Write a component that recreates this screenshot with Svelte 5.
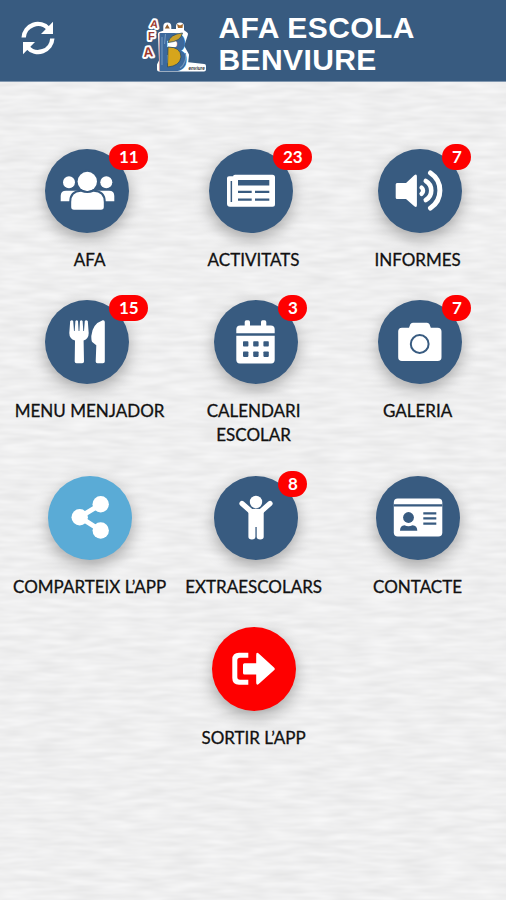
<script lang="ts">
  type Item = {
    label: string;
    icon: string;
    badge?: number;
    tone?: string;
  };

  const rows: Item[][] = [
    [
      { label: 'AFA', icon: 'users', badge: 11 },
      { label: 'ACTIVITATS', icon: 'news', badge: 23 },
      { label: 'INFORMES', icon: 'sound', badge: 7 }
    ],
    [
      { label: 'MENU MENJADOR', icon: 'food', badge: 15 },
      { label: 'CALENDARI ESCOLAR', icon: 'calendar', badge: 3 },
      { label: 'GALERIA', icon: 'camera', badge: 7 }
    ],
    [
      { label: 'COMPARTEIX L’APP', icon: 'share', tone: 'light' },
      { label: 'EXTRAESCOLARS', icon: 'child', badge: 8 },
      { label: 'CONTACTE', icon: 'card' }
    ],
    [{ label: 'SORTIR L’APP', icon: 'exit', tone: 'danger' }]
  ];
</script>

<div class="page">
  <svg class="paper" aria-hidden="true">
    <filter id="paper" x="0" y="0" width="100%" height="100%" color-interpolation-filters="sRGB">
      <feTurbulence type="fractalNoise" baseFrequency="0.03 0.17" numOctaves="2" seed="8" />
      <feColorMatrix
        values="0.08 0 0 0 0.896
                0.08 0 0 0 0.896
                0.08 0 0 0 0.898
                0 0 0 0 1"
      />
    </filter>
    <rect width="100%" height="100%" filter="url(#paper)" />
  </svg>

  <header>
    <button class="refresh" aria-label="Refresh">
      <svg viewBox="0 0 36 36">
        <g id="half">
          <path d="M3.7 17.5A14.2 14.2 0 0 1 28.5 8.8" fill="none" stroke="#fff" stroke-width="4.4" />
          <path d="M33 1.8V14H21Z" fill="#fff" />
        </g>
        <use href="#half" transform="rotate(180 18 18)" />
      </svg>
    </button>

    <svg class="logo" viewBox="0 0 72 64" aria-hidden="true">
      <g class="halo">
        <path d="M21 21L30 18H43L47 21L43 33L48 42L47 51L65 53V56.5H20V52L22 48Z" />
        <path d="M28.3 13.5V18M41 13.5V18" />
      </g>
      <g class="letters">
        <text x="11.5" y="14.5" font-size="10.5" transform="rotate(8 15 11)">A</text>
        <text x="9" y="27" font-size="11">F</text>
        <text x="4.5" y="43.5" font-size="13.5" transform="rotate(-4 10 40)">A</text>
      </g>
      <text class="b" x="18.5" y="56.5" font-size="52" textLength="30" lengthAdjust="spacingAndGlyphs">B</text>
      <path d="M29 29.5Q31 21 43.5 20Q42 28.5 29 29.5Z" fill="#c9a02c" stroke="#2d4d63" stroke-width=".8" />
      <path d="M29 34Q42 34 42 44Q41 53 28.5 54Z" fill="#d6a51c" stroke="#2d4d63" stroke-width=".8" />
      <path d="M23 24V52M26.5 21L25.5 31M46.5 40Q48 50 41 55" fill="none" stroke="#7297bd" stroke-width="1.1" />
      <path d="M25.8 15.5L28.3 11.2L30.8 15.5Z" fill="#94602d" />
      <path d="M38 11L41 12.5L44 11L43.5 15H39Z" fill="#a4692c" />
      <text class="small" x="49.5" y="56.5">enviure</text>
    </svg>

    <h1>AFA ESCOLA<br />BENVIURE</h1>
  </header>

  <main>
    {#each rows as row}
      <div class="row">
        {#each row as item}
          <button class="item">
            <span class="top">
              <span class="circle {item.tone ?? ''}">
                <svg viewBox="0 0 84 84" fill="currentColor">
                  {#if item.icon === 'users'}
                    <circle cx="24" cy="33.3" r="6" />
                    <circle cx="61.3" cy="33.3" r="6" />
                    <path d="M15.7 52.3V47Q15.7 41.7 21 41.7H64Q69.3 41.7 69.3 47V52.3Z" />
                    <g class="cut">
                      <circle cx="42.3" cy="32.5" r="9.7" />
                      <path d="M26.2 58V53Q26.2 43 36 42.7Q42.3 45.5 48.6 42.7Q58.8 43 58.8 53V58Q58.8 60.7 56 60.7H29Q26.2 60.7 26.2 58Z" />
                    </g>
                  {:else if item.icon === 'news'}
                    <path d="M18 29Q18 27.3 20 27.3H24V27.5Q24 25.7 26 25.7H63.5Q66 25.7 66 28.2V55.2Q66 57.7 63.5 57.7H21Q18 57.7 18 54.7Z" />
                    <path class="hole" d="M21.6 32H23.1V53H21.6ZM29 31H60.3V36.4H29ZM29 41.7H42.7V44H29ZM46 41.7H60.3V44H46ZM29 49.4H42.7V51.8H29ZM46 49.4H60.3V51.8H46Z" />
                  {:else if item.icon === 'sound'}
                    <path d="M19 34H28L36.3 26.2Q38.9 24.3 38.9 27.5V56Q38.9 59.2 36.3 57.2L28 50H19Q17.7 50 17.7 48.5V35.5Q17.7 34 19 34Z" />
                    <g class="line">
                      <path d="M52.5 24A21 21 0 0 1 52.5 59" stroke-width="5" />
                      <path d="M47.8 32A11 11 0 0 1 47.8 51" stroke-width="4.6" />
                      <path d="M43.6 38.6A4 4 0 0 1 43.6 44.8" stroke-width="4.4" />
                    </g>
                  {:else if item.icon === 'food'}
                    <path d="M25.2 21Q27 19.6 28.2 21L29 31H29.7L30.4 21Q31.7 19.6 33 21L33.6 31H34.4L35 21Q36.3 19.6 37.6 21L38.3 31H39L39.8 21Q41 19.6 42.8 21L43.7 33Q43.7 38.8 38.6 40.5L39 61.5Q39 63.3 37.2 63.3H31.5Q29.7 63.3 29.7 61.5L30 40.5Q24.3 38.8 24.3 33Z" />
                    <path d="M59.8 22V61.5Q59.8 63.3 58 63.3H52.4Q50.7 63.3 50.7 61.5L51.3 45.3L47.2 42Q46.3 41 46.3 36Q47.3 24 57.7 20.3Q59.8 20 59.8 22Z" />
                  {:else if item.icon === 'calendar'}
                    <path d="M22.3 33.2V29.3Q22.3 25.4 26.2 25.4H30.7V22Q30.7 20.3 32.3 20.3H34.4Q36 20.3 36 22V25.4H47V22Q47 20.3 48.6 20.3H50.7Q52.3 20.3 52.3 22V25.4H56.8Q60.7 25.4 60.7 29.3V33.2Z" />
                    <path d="M22.3 35.8H60.7V59.8Q60.7 63.4 57.2 63.4H25.8Q22.3 63.4 22.3 59.8Z" />
                    <g class="hole">
                      {#each [29, 39.2, 49.4] as x}
                        <rect {x} y="41.2" width="5.4" height="5.4" rx=".8" />
                        <rect {x} y="51.5" width="5.4" height="5.4" rx=".8" />
                      {/each}
                    </g>
                  {:else if item.icon === 'camera'}
                    <path d="M24 27.7H31L32.3 24.2Q33 22.7 34.8 22.7H49Q50.8 22.7 51.5 24.2L52.8 27.7H59.6Q63.5 27.7 63.5 31.5V57.2Q63.5 61 59.6 61H24Q20.2 61 20.2 57.2V31.5Q20.2 27.7 24 27.7Z" />
                    <circle class="ring" cx="41.7" cy="44" r="8.9" />
                  {:else if item.icon === 'share'}
                    <path class="line" d="M52.7 28.3L31.7 41.2L52.7 54.5" stroke-width="5" />
                    <circle cx="31.7" cy="41.2" r="8.2" />
                    <circle cx="52.7" cy="28.3" r="8.2" />
                    <circle cx="52.7" cy="54.5" r="8.2" />
                  {:else if item.icon === 'child'}
                    <circle cx="42" cy="26" r="6.2" />
                    <path class="line" d="M28 27.5L37 35.5H47L56 27.5" stroke-width="5.2" />
                    <path d="M34.4 33.5Q42 32 49.7 33.5V60.8Q49.7 63.4 46.2 63.4Q42.7 63.4 42.7 60.8V51H41.4V60.8Q41.4 63.4 37.9 63.4Q34.4 63.4 34.4 60.8Z" />
                  {:else if item.icon === 'card'}
                    <rect x="17.8" y="22.5" width="48.5" height="38" rx="4" />
                    <path class="hole" d="M17.8 28.2H66.3V30.4H17.8ZM47.3 36.2H60.3V38.4H47.3ZM47.3 41.2H60.3V43.4H47.3ZM47.3 46.6H60.3V48.8H47.3ZM24 54.7Q24 49.6 28.5 49.3Q32.4 51 36.5 49.3Q41.3 49.6 41.3 54.7Z" />
                    <circle class="hole" cx="32.5" cy="41.5" r="5.4" />
                  {:else}
                    <path d="M36.3 25.7H27Q20.3 25.7 20.3 32.4V51Q20.3 57.7 27 57.7H36.3V52.7H28Q25.3 52.7 25.3 50V33.4Q25.3 30.7 28 30.7H36.3Z" />
                    <path d="M31 37.7Q31 36.2 32.5 36.2H44.2V28Q44.2 24.6 46.7 26.5L62 40.5Q63.6 41.9 62 43.3L46.7 57Q44.2 58.8 44.2 55.5V47.6H32.5Q31 47.6 31 46.1Z" />
                  {/if}
                </svg>
              </span>
              {#if item.badge}
                <span class="badge">{item.badge}</span>
              {/if}
            </span>
            <span class="label">{item.label}</span>
          </button>
        {/each}
      </div>
    {/each}
  </main>
</div>

<style>
  :global(body) {
    background: #efefef;
  }

  .page {
    position: relative;
    min-height: 100vh;
    overflow: hidden;
    font-family: Lato, 'Liberation Sans', sans-serif;
    color: #111;
  }

  .paper {
    position: absolute;
    inset: 0;
    width: 100%;
    height: 100%;
  }

  header {
    position: relative;
    box-sizing: border-box;
    height: 82px;
    display: flex;
    align-items: flex-start;
    background: #385b80;
    border-bottom: 1px solid #8197af;
    color: #fff;
  }

  button {
    padding: 0;
    border: none;
    background: none;
    font: inherit;
    color: inherit;
    cursor: pointer;
  }

  .refresh {
    width: 36px;
    height: 36px;
    margin: 20px 83px 0 20px;
  }

  .refresh svg {
    display: block;
  }

  .logo {
    width: 72px;
    height: 64px;
    margin-top: 13px;
    overflow: visible;
    font-family: 'Liberation Sans', sans-serif;
    font-weight: bold;
  }

  .halo {
    fill: #fff;
    stroke: #fff;
    stroke-width: 4;
    stroke-linejoin: round;
    stroke-linecap: round;
  }

  .halo path + path {
    fill: none;
    stroke-width: 8;
  }

  .letters {
    fill: #9d392e;
    stroke: #fff;
    stroke-width: 4;
    stroke-linejoin: round;
    paint-order: stroke;
  }

  .b {
    fill: #3c699c;
    stroke: #3c699c;
    stroke-width: 2.2;
    stroke-linejoin: round;
  }

  .small {
    font-size: 4.6px;
    font-style: italic;
    fill: #333;
  }

  h1 {
    margin: 11.5px 0 0 7.5px;
    font-family: 'Liberation Sans', Arial, sans-serif;
    font-size: 30px;
    line-height: 32.5px;
    font-weight: bold;
    letter-spacing: 0.4px;
  }

  main {
    position: relative;
    padding: 67px 6px 0 7.2px;
  }

  .row {
    display: flex;
    justify-content: center;
    margin-bottom: 29px;
  }

  .item {
    width: 164px;
    display: flex;
    flex-direction: column;
    align-items: center;
    justify-content: flex-start;
  }

  .top {
    display: flex;
    align-items: flex-start;
  }

  .circle {
    --tone: #385b80;
    width: 84px;
    height: 84px;
    border-radius: 50%;
    background: var(--tone);
    color: #fff;
    box-shadow: 0 6px 16px rgba(0, 0, 0, 0.3);
  }

  .circle.light {
    --tone: #5aabd6;
  }

  .circle.danger {
    --tone: #fe0000;
  }

  .circle svg {
    display: block;
  }

  .hole {
    fill: var(--tone);
  }

  .cut {
    stroke: var(--tone);
    stroke-width: 4;
    paint-order: stroke;
  }

  .ring {
    fill: none;
    stroke: var(--tone);
    stroke-width: 2;
  }

  .line {
    fill: none;
    stroke: currentColor;
    stroke-linecap: round;
    stroke-linejoin: round;
  }

  .badge {
    position: relative;
    margin: -5px -14px 0 -19.5px;
    padding: 0 9.7px;
    border-radius: 13px;
    background: #fe0000;
    color: #fff;
    font-size: 17px;
    line-height: 26px;
    font-weight: bold;
  }

  .label {
    width: 160px;
    margin: 15px 0 -1px;
    font-size: 17px;
    line-height: 24.2px;
    -webkit-text-stroke: 0.3px currentColor;
  }
</style>
